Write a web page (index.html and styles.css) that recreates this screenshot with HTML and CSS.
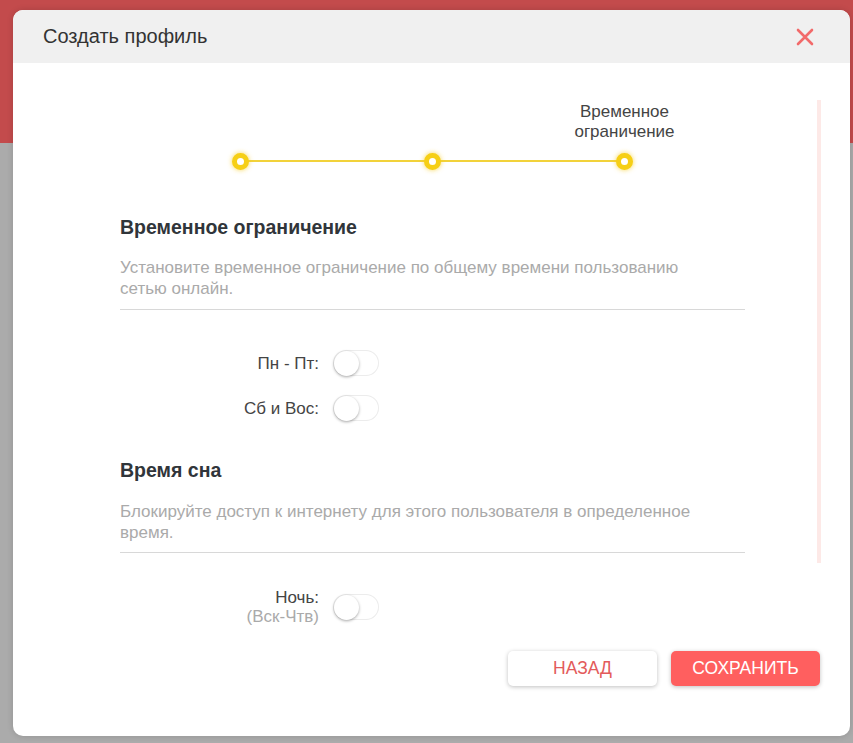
FILE: index.html
```html
<!DOCTYPE html>
<html lang="ru">

<head>
    <meta charset="UTF-8">
    <meta name="viewport" content="width=device-width, initial-scale=1.0">
    <title>Создать профиль</title>
    <link rel="stylesheet" href="styles.css">
</head>

<body>

    <div class="modal">
        <div class="modal-header">
            <span class="modal-title">Создать профиль</span>
            <span class="modal-close">
                <svg width="18" height="18" viewBox="0 0 18 18">
                    <path d="M2 2 L16 16 M16 2 L2 16" stroke="#f26a6a" stroke-width="2.6" stroke-linecap="round" />
                </svg>
            </span>
        </div>

        <div class="modal-body">
            <div class="content">
                <div class="stepper">
                    <div class="step-labels">
                        <div class="step-label"></div>
                        <div class="step-label"></div>
                        <div class="step-label">Временное ограничение</div>
                    </div>
                    <div class="step-track">
                        <div class="step-line"></div>
                        <div class="step"><span class="dot"></span></div>
                        <div class="step"><span class="dot"></span></div>
                        <div class="step"><span class="dot"></span></div>
                    </div>
                </div>

                <div class="section">
                    <h2 class="section-title">Временное ограничение</h2>
                    <p class="section-desc">Установите временное ограничение по общему времени пользованию сетью онлайн.</p>
                </div>

                <div class="toggle-list">
                    <div class="toggle-row">
                        <div class="toggle-label">Пн - Пт:</div>
                        <div class="toggle"><span class="knob"></span></div>
                    </div>
                    <div class="toggle-row">
                        <div class="toggle-label">Сб и Вос:</div>
                        <div class="toggle"><span class="knob"></span></div>
                    </div>
                </div>

                <div class="section section-sleep">
                    <h2 class="section-title">Время сна</h2>
                    <p class="section-desc">Блокируйте доступ к интернету для этого пользователя в определенное время.</p>
                </div>

                <div class="toggle-list toggle-list-night">
                    <div class="toggle-row">
                        <div class="toggle-label">Ночь:<br><span class="hint">(Вск-Чтв)</span></div>
                        <div class="toggle"><span class="knob"></span></div>
                    </div>
                </div>
            </div>
            <div class="scroll-track"></div>
        </div>

        <div class="modal-footer">
            <button class="btn btn-back">НАЗАД</button>
            <button class="btn btn-save">СОХРАНИТЬ</button>
        </div>
    </div>

</body>

</html>
```

FILE: styles.css
```css
* {
    margin: 0;
    padding: 0;
    box-sizing: border-box;
}

body {
    height: 100vh;
    overflow: hidden;
    background: linear-gradient(to bottom, #c34b4c 0, #c34b4c 143px, #ababab 143px);
    font-family: "Liberation Sans", Arial, sans-serif;
    padding: 10px 3px 0 13px;
}

.modal {
    width: 837px;
    height: 726px;
    background: #fff;
    border-radius: 10px;
    overflow: hidden;
    display: flex;
    flex-direction: column;
    box-shadow: 0 0 6px rgba(0, 0, 0, 0.15);
}

.modal-header {
    height: 53px;
    flex-shrink: 0;
    background: #f0f0f0;
    display: flex;
    align-items: center;
    justify-content: space-between;
    padding: 0 36px 0 30px;
}

.modal-title {
    font-size: 20px;
    color: #333;
}

.modal-close {
    display: flex;
    margin-top: 1px;
}

.modal-body {
    display: flex;
    padding-left: 107px;
}

.content {
    width: 625px;
    padding-top: 39px;
}

.scroll-track {
    width: 4px;
    height: 463px;
    margin-top: 37px;
    margin-left: 72px;
    background: #fde9e7;
}

/* stepper */
.stepper {
    width: 576px;
    margin: 0 auto;
}

.step-labels {
    display: grid;
    grid-template-columns: repeat(3, 1fr);
}

.step-label {
    text-align: center;
    font-size: 17px;
    line-height: 20px;
    color: #444;
    padding: 0 40px;
}

.step-track {
    position: relative;
    display: grid;
    grid-template-columns: repeat(3, 1fr);
    height: 20px;
    margin-top: 9px;
}

.step-line {
    position: absolute;
    left: 96px;
    right: 96px;
    top: 9px;
    height: 2px;
    background: #f2d23a;
}

.step {
    display: flex;
    justify-content: center;
    align-items: center;
}

.dot {
    position: relative;
    width: 17px;
    height: 17px;
    border-radius: 50%;
    background: #fff;
    border: 5px solid #f6cf16;
    box-shadow: 0 0 5px rgba(246, 200, 20, 0.75);
}

/* sections */
.section {
    margin-top: 44px;
    padding-bottom: 10px;
    border-bottom: 1px solid #d8d8d8;
}

.section-sleep {
    margin-top: 37px;
    padding-bottom: 9px;
}

.section-title {
    font-size: 19.5px;
    line-height: 24px;
    font-weight: bold;
    color: #30353a;
}

.section-desc {
    max-width: 590px;
    margin-top: 18px;
    font-size: 17px;
    line-height: 21px;
    color: #aaa;
}

.section-sleep .section-desc {
    margin-top: 19px;
}

/* toggles */
.toggle-list {
    margin-top: 40px;
    display: flex;
    flex-direction: column;
    gap: 19px;
}

.toggle-list-night {
    margin-top: 35px;
}

.toggle-row {
    display: flex;
    align-items: center;
}

.toggle-label {
    width: 199px;
    text-align: right;
    font-size: 17px;
    line-height: 19px;
    color: #444;
}

.hint {
    color: #aaa;
}

.toggle {
    position: relative;
    width: 46px;
    height: 26px;
    margin-left: 14px;
    border-radius: 13px;
    background: #fff;
    box-shadow: inset 0 0 0 1px #ececec;
}

.knob {
    position: absolute;
    left: 1px;
    top: 1px;
    width: 25px;
    height: 25px;
    border-radius: 50%;
    background: #fff;
    box-shadow: 0 1px 3px rgba(0, 0, 0, 0.35);
}

/* footer */
.modal-footer {
    display: flex;
    justify-content: flex-end;
    gap: 14px;
    padding-right: 30px;
    margin-top: 25px;
}

.btn {
    width: 149px;
    height: 35px;
    border: none;
    border-radius: 5px;
    font-family: "Liberation Sans", Arial, sans-serif;
    font-size: 17.5px;
    cursor: pointer;
}

.btn-back {
    background: #fff;
    color: #e35b5b;
    box-shadow: 0 1px 4px rgba(0, 0, 0, 0.25);
}

.btn-save {
    background: #ff5f5f;
    color: #fff;
    box-shadow: 0 1px 4px rgba(0, 0, 0, 0.25);
}
```
